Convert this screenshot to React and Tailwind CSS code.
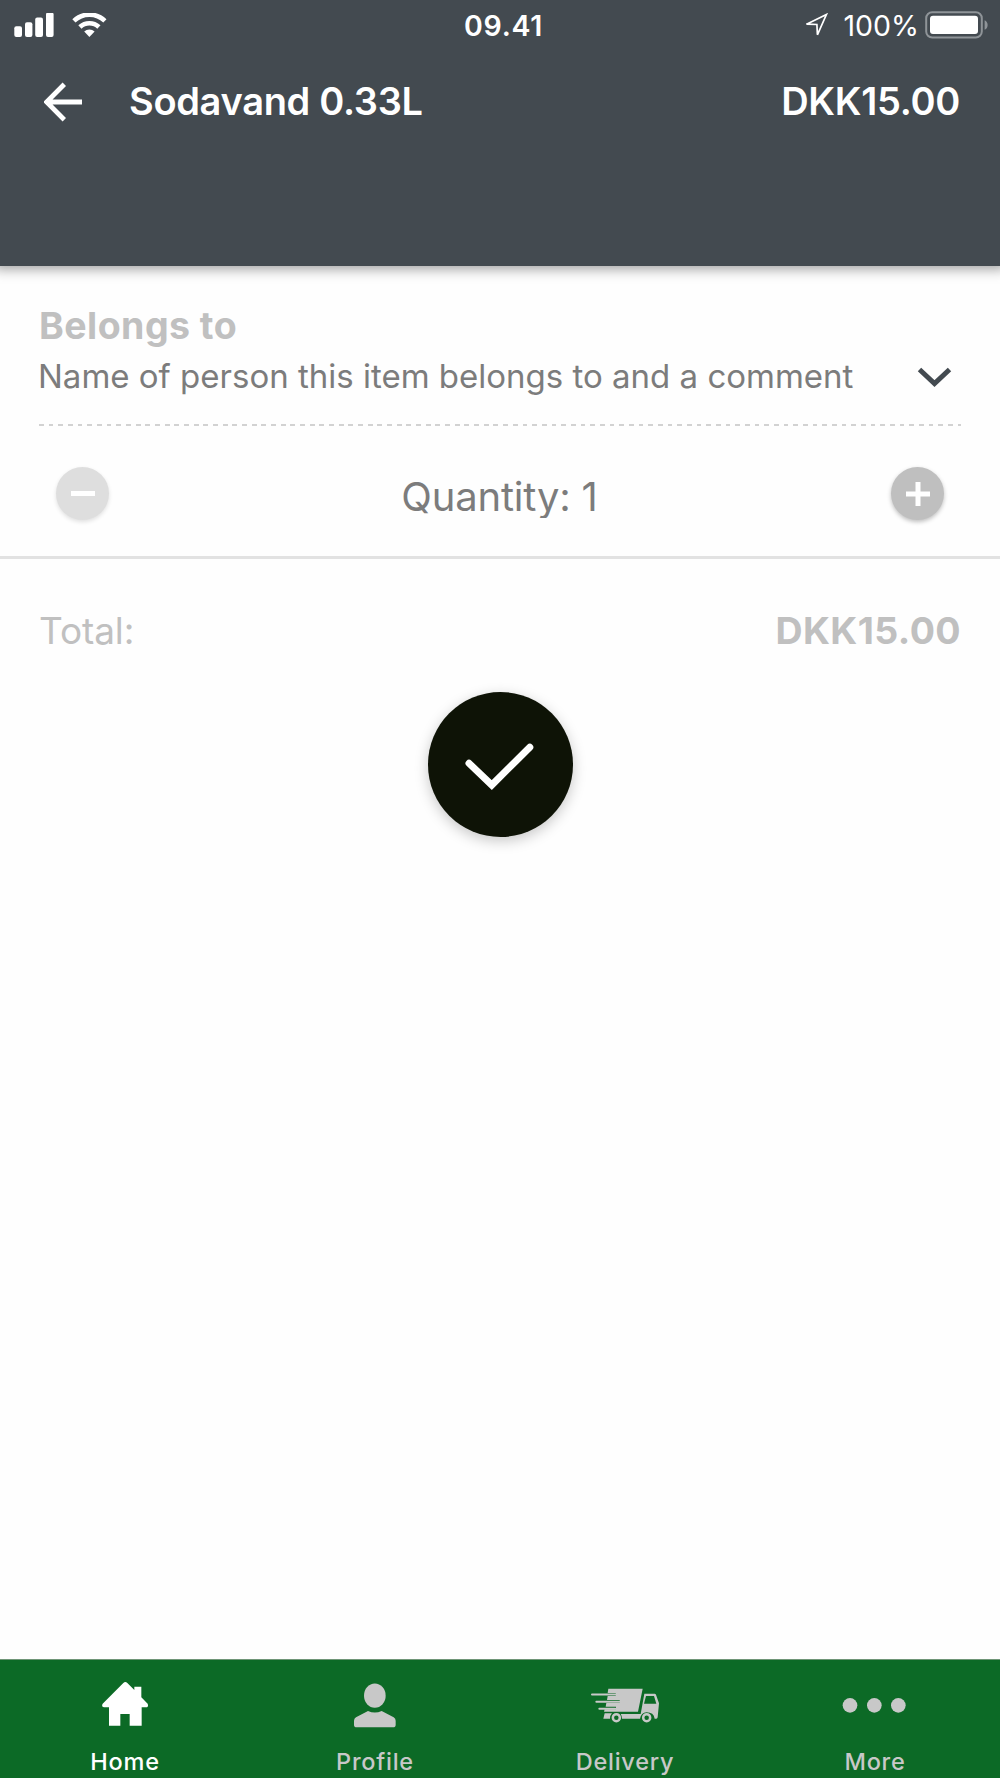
import { useState } from "react";

const PRICE = 15;

const formatPrice = (value) => `DKK${value.toFixed(2)}`;

function StatusBar() {
  return (
    <div className="grid h-[51px] grid-cols-[464px_1fr_auto] items-center pr-[11px]">
      <div className="flex items-center gap-[18px] pl-3.5">
        <svg width="40" height="26" viewBox="0 0 40 26" fill="#fff">
          <rect x="0.3" y="13.3" width="7.7" height="10.6" rx="2" />
          <rect x="11" y="9.2" width="7.4" height="14.7" rx="2" />
          <rect x="21.2" y="4.5" width="7.8" height="19.4" rx="2" />
          <rect x="32" y="-0.5" width="7.6" height="24.4" rx="2" />
        </svg>
        <svg width="35" height="26" viewBox="0 1.5 35 26">
          <g fill="none" stroke="#fff" strokeWidth="4.6">
            <path d="M1.9 9.3a22.5 22.5 0 0 1 31 0" />
            <path d="M7.9 15.5a13.8 13.8 0 0 1 19 0" />
          </g>
          <path d="M17.4 25.4l-5.2-5.3a7.4 7.4 0 0 1 10.4 0z" fill="#fff" />
        </svg>
      </div>
      <span className="pt-px text-[28.5px] font-semibold leading-none tracking-[0.7px]">09.41</span>
      <div className="flex items-center">
        <svg width="25" height="25" viewBox="0 0 25 25" className="mr-[14px]">
          <path
            d="M2.5 11.2L22.4 1.5 13.4 21.8 12.9 11.5z"
            fill="none"
            stroke="#fff"
            strokeWidth="1.7"
            strokeLinejoin="miter"
          />
        </svg>
        <span className="pt-px text-[28.5px] leading-none">100%</span>
        <svg width="64" height="28" viewBox="0 0 64 28" className="-mt-0.5 ml-[6px]">
          <rect x="1.2" y="1.2" width="55.6" height="25.3" rx="6" fill="none" stroke="#8f9498" strokeWidth="2" />
          <rect x="5" y="4.7" width="48" height="18.4" rx="3" fill="#fff" />
          <path d="M59.6 9.2c4 1.6 4 8 0 9.6z" fill="#8f9498" />
        </svg>
      </div>
    </div>
  );
}

function Header({ title, price }) {
  return (
    <header className="h-[266px] bg-[#434a50] text-white shadow-[0_-3px_12px_6px_rgba(0,0,0,0.38)]">
      <StatusBar />
      <div className="flex h-[101px] items-center pl-[44px] pr-10">
        <button type="button" aria-label="Back">
          <svg width="40" height="40" viewBox="0 0 40 40" fill="none" stroke="#fff" strokeWidth="4.8">
            <path d="M38 20H3M20.3 2.2L2.6 20l17.7 17.8" />
          </svg>
        </button>
        <h1 className="ml-[45px] text-[38px] font-semibold leading-[39px] tracking-[-0.32px]">{title}</h1>
        <span className="ml-auto text-[38px] font-semibold leading-[39px] tracking-[-0.28px]">{price}</span>
      </div>
    </header>
  );
}

function HomeIcon() {
  return (
    <svg width="80" height="50" viewBox="0 0 240 150" fill="currentColor">
      <path d="M115 15q6-6 12 0l21 21V26h21v32l19 19q4 11-6 11h-12v55h-36v-35h-28v35H72V88H58q-10-2-5-11z" />
    </svg>
  );
}

function ProfileIcon() {
  return (
    <svg width="80" height="50" viewBox="0 0 240 150" fill="currentColor">
      <ellipse cx="119.5" cy="53" rx="32.5" ry="36.5" />
      <path d="M99 99q20.5 9 41 0l36 19q6 4 6 10v12q0 8-8 8H65q-8 0-8-8v-12q0-6 6-10z" />
    </svg>
  );
}

function DeliveryIcon() {
  return (
    <svg width="80" height="50" viewBox="0 0 240 150" fill="currentColor">
      <path d="M70 32h103l-14 69H57l2-7h34V86H62l2-11h40v-9H66l2-12h24v-9H68z" />
      <g stroke="currentColor" strokeWidth="6" strokeLinecap="round">
        <path d="M21 49.5h70M34 71h69M43 92h48" />
      </g>
      <path
        fillRule="evenodd"
        d="M178 47h31q3 0 4 3l9 26-4 42q-1 4-4 4h-5q-3-19-24-19-17 1-20 19h-54q0-8-4-14h60zM183 54l-6 23h37l-7-23z"
      />
      <path d="M59 106h22q-6 6-6 16H55z" />
      <g fill="none" stroke="currentColor" strokeWidth="7.5">
        <circle cx="94" cy="119" r="10.5" />
        <circle cx="185" cy="119" r="10.5" />
      </g>
    </svg>
  );
}

function MoreIcon() {
  return (
    <svg width="80" height="50" viewBox="0 0 240 150" fill="currentColor">
      <circle cx="45" cy="82" r="22" />
      <circle cx="118" cy="82" r="22" />
      <circle cx="190" cy="82" r="22" />
    </svg>
  );
}

const tabs = [
  { label: "Home", Icon: HomeIcon },
  { label: "Profile", Icon: ProfileIcon },
  { label: "Delivery", Icon: DeliveryIcon },
  { label: "More", Icon: MoreIcon },
];

function TabBar() {
  const [active, setActive] = useState("Home");

  return (
    <nav className="grid h-[119px] grid-cols-4 border-t border-[#6f9577] bg-[#0c6a26]">
      {tabs.map(({ label, Icon }) => (
        <button
          key={label}
          type="button"
          onClick={() => setActive(label)}
          className={`flex flex-col items-center pt-[18px] ${active === label ? "text-white" : "text-[#c8c8c8]"}`}
        >
          <Icon />
          <span className="mt-5 text-[23.5px] font-[450] leading-7 tracking-[0.75px]">{label}</span>
        </button>
      ))}
    </nav>
  );
}

export default function App() {
  const [quantity, setQuantity] = useState(1);

  return (
    <div className="flex h-[1778px] w-[1000px] flex-col bg-[#fefefe] font-['Inter',sans-serif]">
      <Header title="Sodavand 0.33L" price={formatPrice(PRICE)} />

      <main className="flex-1">
        <section className="px-[39px] pt-[39px]">
          <h2 className="text-[37.5px] font-bold leading-[42px] tracking-[0.45px] text-[#c0c0c0]">Belongs to</h2>
          <div className="mt-[9px] flex h-10 items-center justify-between pr-[9px]">
            <p className="-ml-px text-[33px] leading-10 text-[#7c7c7c]">
              Name of person this item belongs to and a comment
            </p>
            <svg width="35" height="22" viewBox="0 0 35 22" fill="none" stroke="#434a50" strokeWidth="5" className="mt-[3px]">
              <path d="M2.5 2.5l15 14 15-14" />
            </svg>
          </div>
          <div className="mt-[28px] h-[2px] bg-[repeating-linear-gradient(90deg,#d2d2d2_0_4.8px,transparent_4.8px_9.67px)]" />
        </section>

        <section className="flex h-[133px] items-start justify-between border-b-[3px] border-[#e2e2e2] px-14 pt-[41px]">
          <button
            type="button"
            aria-label="Remove one"
            onClick={() => setQuantity(Math.max(1, quantity - 1))}
            className="flex size-[53px] items-center justify-center rounded-full bg-[#dedede] shadow-[0_2px_4px_rgba(0,0,0,0.12)]"
          >
            <span className="h-[5px] w-6 bg-white" />
          </button>
          <p className="mt-[5px] h-[46px] overflow-hidden pr-px text-[40px] leading-[49px] tracking-[-0.2px] text-[#7c7c7c]">
            Quantity: {quantity}
          </p>
          <button
            type="button"
            aria-label="Add one"
            onClick={() => setQuantity(quantity + 1)}
            className="flex size-[53px] items-center justify-center rounded-full bg-[#bfbfbf] shadow-[0_2px_4px_rgba(0,0,0,0.25)]"
          >
            <svg width="24" height="24" viewBox="0 0 24 24" stroke="#fff" strokeWidth="5">
              <path d="M0 12h24M12 0v24" />
            </svg>
          </button>
        </section>

        <section className="flex items-center justify-between px-[39px] pt-[49px] text-[#c0c0c0]">
          <span className="text-[37px] leading-[46px] tracking-[-0.1px]">Total:</span>
          <span className="text-[37.5px] font-bold leading-[46px] tracking-[0.4px]">
            {formatPrice(PRICE * quantity)}
          </span>
        </section>

        <div className="flex justify-center pt-[38px]">
          <button
            type="button"
            aria-label="Confirm"
            className="size-[145px] rounded-full bg-[#0e1306] shadow-[0_4px_14px_rgba(0,0,0,0.22)]"
          >
            <svg width="145" height="145" viewBox="0 0 145 145" fill="none" stroke="#fff" strokeWidth="7">
              <path d="M41 71.3L63.8 93 101.8 55.3" strokeLinecap="round" />
            </svg>
          </button>
        </div>
      </main>

      <TabBar />
    </div>
  );
}
